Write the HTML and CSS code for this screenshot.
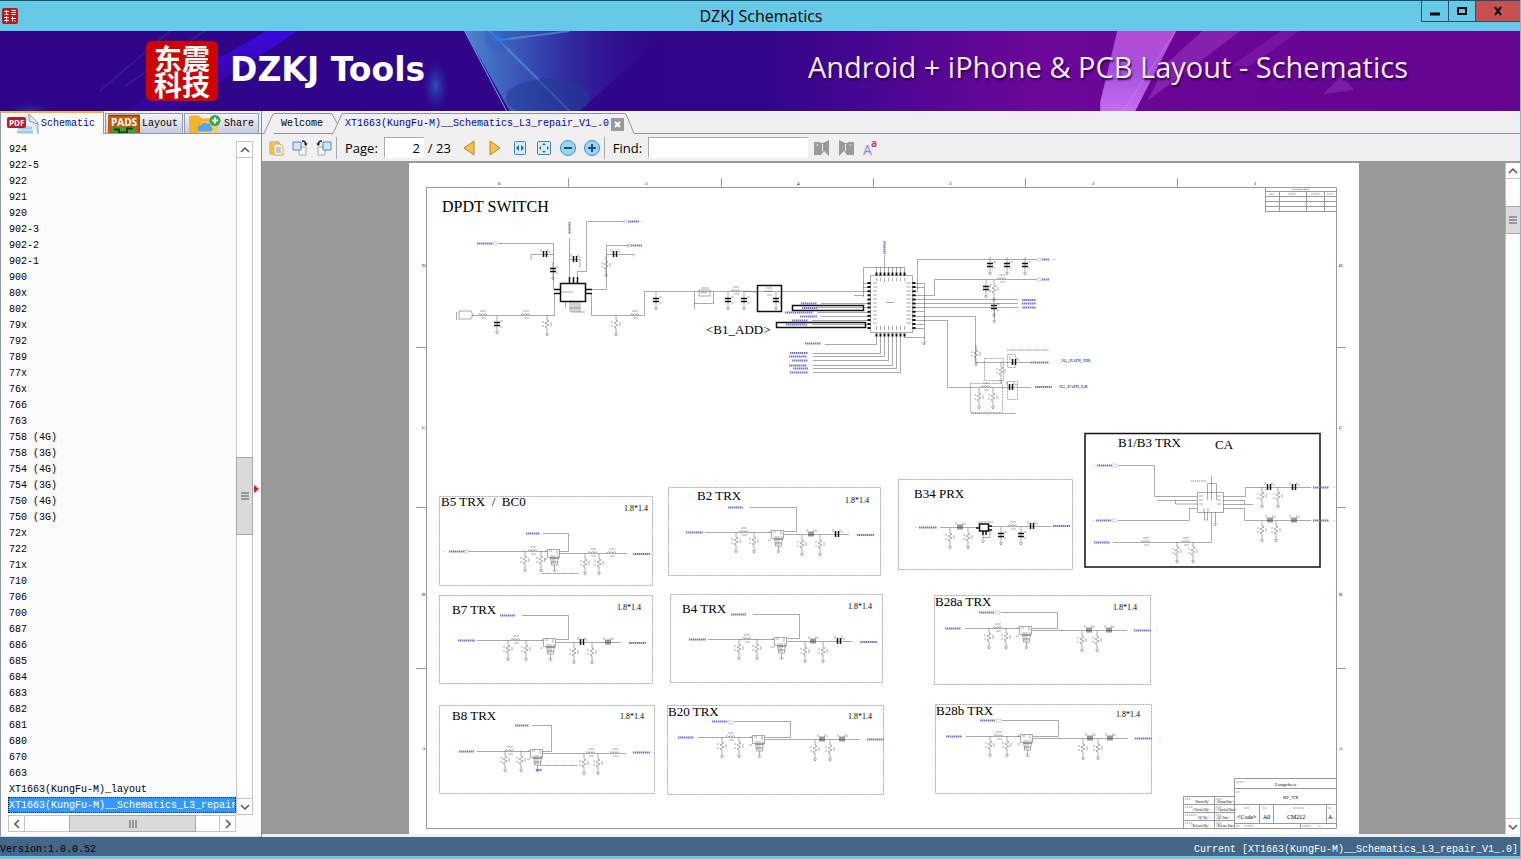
FILE: index.html
```html
<!DOCTYPE html>
<html lang="en">
<head>
<meta charset="utf-8">
<title>DZKJ Schematics</title>
<link rel="stylesheet" href="styles.css">
</head>
<body>
<header class="titlebar">
  <svg class="app-icon" viewBox="0 0 16 16" aria-hidden="true"><rect width="16" height="16" rx="2" fill="#c8100c"/><path d="M2 3.500h5M4.500 2v5M2.500 6.500h4M9 2.500h5M9 4.500h5M9.500 6.500h4M2 9.500h5M4.500 8.500v6M2 12.500h5M9 10.500h5M10.500 8.500v5M12 12l2 2" stroke="#fff" fill="none"/></svg>
  <h1 class="title">DZKJ Schematics</h1>
  <div class="win-buttons">
    <button class="win" aria-label="Minimize"><svg viewBox="0 0 12 12"><path d="M1 9h10" stroke="#000" stroke-width="3"/></svg></button>
    <button class="win" aria-label="Maximize"><svg viewBox="0 0 12 12"><path d="M2 3h8v6H2z" fill="none" stroke="#000" stroke-width="2"/></svg></button>
    <button class="win win-close" aria-label="Close"><svg viewBox="0 0 12 12"><path d="M3 2l6 8M9 2l-6 8" stroke="#000" stroke-width="2"/></svg></button>
  </div>
</header>
<section class="banner">
  <svg class="banner-art" viewBox="0 31 1521 80" preserveAspectRatio="none" aria-hidden="true">
    <defs>
      <linearGradient id="sky"><stop offset="0" stop-color="#2e0587"/><stop offset=".5" stop-color="#30068b"/><stop offset=".58" stop-color="#4a0792"/><stop offset=".68" stop-color="#6b0799"/><stop offset="1" stop-color="#640490"/></linearGradient>
      <linearGradient id="ray" x1="0" y1="0" x2="0" y2="1"><stop offset="0" stop-color="#3b08e0"/><stop offset="1" stop-color="#3607a6" stop-opacity=".5"/></linearGradient>
      <linearGradient id="prism"><stop offset="0" stop-color="#4a86cf"/><stop offset=".35" stop-color="#3447b0"/><stop offset="1" stop-color="#30068b" stop-opacity="0"/></linearGradient>
      <linearGradient id="beam" x1="0" y1="0" x2="0" y2="1"><stop offset="0" stop-color="#b44dd2"/><stop offset=".5" stop-color="#a650dc"/><stop offset="1" stop-color="#c66df2"/></linearGradient>
      <radialGradient id="glow"><stop offset="0" stop-color="#2877d8" stop-opacity=".8"/><stop offset="1" stop-color="#2a3bb0" stop-opacity="0"/></radialGradient>
    </defs>
    <rect y="31" width="1521" height="80" fill="url(#sky)"/>
    <path d="M267 31h31L175 111h-50z" fill="url(#ray)"/>
    <path d="M205 31l-80 55M170 31l-70 60" stroke="#4330a5" stroke-width="2" opacity=".45"/>
    <ellipse cx="436" cy="86" rx="13" ry="25" fill="url(#glow)" opacity=".8"/>
    <ellipse cx="30" cy="111" rx="20" ry="9" fill="url(#glow)" opacity=".5"/>
    <path d="M465 31h205l-90 80h-70z" fill="url(#prism)"/>
    <path d="M465 31l42 80" stroke="#70a9ed"/>
    <path d="M490 31l80 80M500 40l70-9" stroke="#55b8e2" stroke-width="2" opacity=".5"/>
    <ellipse cx="498" cy="38" rx="15" ry="17" fill="url(#glow)"/>
    <ellipse cx="548" cy="98" rx="42" ry="19" fill="#203b91" opacity=".55"/>
    <path d="M1118 31h59l-41 80h-35v-9z" fill="url(#beam)"/>
    <path d="M1176 32l-52 79" stroke="#de85f4" opacity=".6"/>
    <path d="M1203 31h38l-93 70 20-38z" fill="#9a34bc" opacity=".6"/>
    <path d="M1282 31h18l-50 35h-18z" fill="#8120ab" opacity=".6"/>
    <path d="M1342 76l13 14-31 4z" fill="#872bb4" opacity=".65"/>
  </svg>
  <div class="brand">
    <div class="seal"><p>东震科技</p></div>
    <strong class="brand-name">DZKJ Tools</strong>
  </div>
  <p class="slogan">Android + iPhone &amp; PCB Layout - Schematics</p>
</section>
<main class="workspace">
  <aside class="sidebar">
    <nav class="side-tabs">
      <button class="side-tab active"><svg class="i-pdf" viewBox="0 0 32 20"><path d="M13 0h10l8 9v11H13z" fill="#e9f3fa"/><path d="M22 0l9 9v11M22 0v7l9 3" fill="#d6e5ee" stroke="#8c9aa5"/><path d="M11 14h14M10 18h16" stroke="#9ecae7" stroke-width="3"/><rect x="0" y="3" width="19" height="11" rx="2" fill="#bd1a26"/><text x="2" y="12" class="ico-text pdf-text">PDF</text></svg>Schematic</button>
      <button class="side-tab"><svg class="i-pads" viewBox="0 0 32 19"><rect width="32" height="19" fill="#c45b12"/><path d="M1 1h30v17" fill="none" stroke="#8b3a0c"/><text x="3" y="11" class="ico-text">PADS</text><path d="M4 13h24v6H4z" fill="#3da32b"/><path d="M6 15h5v3h8v-4h6" stroke="#173e13" stroke-width="2" fill="none"/></svg>Layout</button>
      <button class="side-tab share-tab"><svg class="i-share" viewBox="0 0 32 19"><path d="M0 3q0-2 2-2h8l3 3h15v15H0z" fill="#f6b42a"/><path d="M13 7h16v12H9z" fill="#ffcd50"/><path d="M9 16q-2-5 3-5 2-5 6-2 4-1 4 3 4 4-1 5H11q-2 0-2-1" fill="#58a7e6"/><circle cx="26" cy="6" r="5.500" fill="#36a54b"/><path d="M26 3v6M23 6h6" stroke="#fff" stroke-width="2"/></svg>Share</button>
    </nav>
    <div class="side-body">
      <div class="list-area">
        <ul class="file-list">
          <li><button>924</button></li><li><button>922-5</button></li><li><button>922</button></li><li><button>921</button></li><li><button>920</button></li><li><button>902-3</button></li><li><button>902-2</button></li><li><button>902-1</button></li><li><button>900</button></li><li><button>80x</button></li><li><button>802</button></li><li><button>79x</button></li><li><button>792</button></li><li><button>789</button></li><li><button>77x</button></li><li><button>76x</button></li><li><button>766</button></li><li><button>763</button></li><li><button>758 (4G)</button></li><li><button>758 (3G)</button></li><li><button>754 (4G)</button></li><li><button>754 (3G)</button></li><li><button>750 (4G)</button></li><li><button>750 (3G)</button></li><li><button>72x</button></li><li><button>722</button></li><li><button>71x</button></li><li><button>710</button></li><li><button>706</button></li><li><button>700</button></li><li><button>687</button></li><li><button>686</button></li><li><button>685</button></li><li><button>684</button></li><li><button>683</button></li><li><button>682</button></li><li><button>681</button></li><li><button>680</button></li><li><button>670</button></li><li><button>663</button></li><li><button>XT1663(KungFu-M)_layout</button></li><li><button class="selected">XT1663(KungFu-M)__Schematics_L3_repair_V1_.0</button></li>
        </ul>
        <div class="scroll-v">
          <button class="arrow" aria-label="Scroll up"><svg viewBox="0 0 10 10"><path d="M1 7l4-4 4 4"/></svg></button>
          <div class="track side-track"><div class="thumb"><svg viewBox="0 0 10 10"><path d="M1 2h8M1 5h8M1 8h8"/></svg></div></div>
          <button class="arrow" aria-label="Scroll down"><svg viewBox="0 0 10 10"><path d="M1 3l4 4 4-4"/></svg></button>
        </div>
      </div>
      <div class="scroll-h">
        <button class="arrow" aria-label="Scroll left"><svg viewBox="0 0 10 10"><path d="M7 1L3 5l4 4"/></svg></button>
        <div class="track"><div class="thumb"><svg viewBox="0 0 10 10"><path d="M2 1v8M5 1v8M8 1v8"/></svg></div></div>
        <button class="arrow" aria-label="Scroll right"><svg viewBox="0 0 10 10"><path d="M3 1l4 4-4 4"/></svg></button>
      </div>
      <button class="splitter" aria-label="Collapse panel"><svg viewBox="0 0 5 8"><path d="M0 0l5 4-5 4z" fill="#d21f1f"/></svg></button>
    </div>
  </aside>
  <section class="viewer">
    <nav class="doc-tabs">
      <svg class="edge" viewBox="0 0 12 21"><path d="M0 20.500h2L11 1l1-.5"/></svg>
      <button class="doc-tab">Welcome</button>
      <svg class="edge" viewBox="0 0 12 21"><path d="M0 .5l1 .5 5 9M0 20.500h2L11 1l1-.5"/></svg>
      <button class="doc-tab current">XT1663(KungFu-M)__Schematics_L3_repair_V1_.0</button>
      <button class="tab-close" aria-label="Close tab"><svg viewBox="0 0 13 13"><path d="M4 4l5 5M9 4l-5 5" stroke="#fff" stroke-width="2"/></svg></button>
      <svg class="edge" viewBox="0 0 12 21"><path d="M0 .5l2 .5 8 19.500h2"/></svg>
      <span class="rest"></span>
    </nav>
    <div class="toolbar">
      <button class="tool" aria-label="Open"><svg viewBox="0 0 16 16"><path d="M2 2h9v12H2z" fill="#f6d88a" stroke="#c79d45"/><path d="M6 4h6l3 3v8H6z" fill="#fff7dd" stroke="#c9a14a"/><path d="M8 8h5M8 10h5M8 12h5" stroke="#6f9dc5"/><path d="M2 2l4 2v11l-4-2z" fill="#edbd56"/></svg></button>
      <button class="tool" aria-label="Rotate right"><svg viewBox="0 0 16 16"><path d="M7 7h7v8H7z" fill="#f4f6f8" stroke="#a3a9b0"/><path d="M1 2h8v8H1z" fill="#cfe5f8" stroke="#5887b7"/><path d="M10 1q4 0 4 4" fill="none" stroke="#222" stroke-width="1.500"/><path d="M11.500 3.500h4L14 6z" fill="#222"/></svg></button>
      <button class="tool" aria-label="Rotate left"><svg viewBox="0 0 16 16"><path d="M2 7h7v8H2z" fill="#f4f6f8" stroke="#a3a9b0"/><path d="M7 2h8v8H7z" fill="#cfe5f8" stroke="#5887b7"/><path d="M6 1Q2 1 2 5" fill="none" stroke="#222" stroke-width="1.500"/><path d="M4.500 3.500h-4L2 6z" fill="#222"/></svg></button>
      <span class="sep"></span>
      <label for="page">Page:</label>
      <input id="page" class="page-input" type="text" value="2">
      <span class="total">/ 23</span>
      <button class="tool wide" aria-label="Previous page"><svg viewBox="0 0 16 16"><path d="M13 1v14L3 8z" fill="#f1c34a" stroke="#b98316"/></svg></button>
      <button class="tool wide" aria-label="Next page"><svg viewBox="0 0 16 16"><path d="M3 1v14l10-7z" fill="#f1c34a" stroke="#b98316"/></svg></button>
      <button class="tool" aria-label="Fit width"><svg viewBox="0 0 16 16"><rect x="2.500" y="1.500" width="11" height="13" rx="1" fill="#d9ecfb" stroke="#3e83c6"/><path d="M7 5v6L4 8zM9 5v6l3-3z" fill="#2168ae"/></svg></button>
      <button class="tool" aria-label="Fit page"><svg viewBox="0 0 16 16"><rect x="1.500" y="1.500" width="13" height="13" rx="1" fill="#d9ecfb" stroke="#3e83c6"/><path d="M8 3l2 2H6zM8 13l2-2H6zM3 8l2-2v4zM13 8l-2-2v4z" fill="#2168ae"/></svg></button>
      <button class="tool" aria-label="Zoom out"><svg viewBox="0 0 16 16"><circle cx="8" cy="8" r="7.500" fill="#9dd3f6" stroke="#3b8bc7"/><path d="M4 8h8" stroke="#13518d" stroke-width="2"/></svg></button>
      <button class="tool" aria-label="Zoom in"><svg viewBox="0 0 16 16"><circle cx="8" cy="8" r="7.500" fill="#9dd3f6" stroke="#3b8bc7"/><path d="M4 8h8M8 4v8" stroke="#13518d" stroke-width="2"/></svg></button>
      <span class="sep"></span>
      <label for="find" class="find-label">Find:</label>
      <input id="find" class="find-input" type="text">
      <button class="tool" aria-label="Find previous"><svg viewBox="0 0 16 16"><path d="M0 2h5l2 1h2l6-3v16l-5-5-3 4H0z" fill="#999"/><path d="M2.500 5h2M8.500 4v7" stroke="#eee"/></svg></button>
      <button class="tool" aria-label="Find next"><svg viewBox="0 0 16 16"><path d="M16 2h-5l-2 1H7L1 0v16l5-5 3 4h7z" fill="#999"/><path d="M13.500 5h-2M7.500 4v7" stroke="#eee"/></svg></button>
      <button class="tool" aria-label="Match case"><svg viewBox="0 0 16 16"><text x="1" y="15" class="case-big">A</text><text x="9" y="7" class="case-small">a</text></svg></button>
    </div>
    <div class="canvas-row">
      <div class="canvas">
        <svg class="sheet" viewBox="408 163 950 671" role="img" aria-label="RF TX schematic page">
          <defs>
            <g id="gnd"><path d="M-2 0h4M-1 1.500h2"/></g>
            <g id="cap"><path d="M0-8v16M3-3h3M3 3h2"/><path d="M-3-1.500h6M-3 1.500h6" class="thick"/><use href="#gnd" y="8"/></g>
            <g id="caph"><path d="M-4-5v3M3-5v3M5-3v2" /><path d="M-1.500-3v6M1.500-3v6" class="thick"/></g>
            <g id="capg"><path d="M-4-5v3M3-5v3M5-4v2"/><path d="M-2-2.500v5M0-2.500v5M2-2.500v5" class="mid"/></g>
            <g id="res"><path d="M0 0v5l2 1-4 2 4 2-4 2 2 1v6M-4 6v2M-4 10v2M4 7v4"/><use href="#gnd" y="19"/></g>
            <g id="coil"><path d="M-5 0q1-3 3 0 1-3 3 0 1-3 3 0M-3-4h6M-2 3h5"/></g>
            <g id="ic"><path d="M.5.5h12v8H.5zM2 2h3M9 2h2M9 4h2M3 9.500h9M4 6v7h7V6M6 6v9M8 6v9M4.500 13v3h6v-3M7.500 16v5M-2 2h2M-3 10h3"/><use href="#gnd" x="7.500" y="21"/></g>
            <g id="trx-a">
              <path d="M-66 2.500H0M-21-22.500h46.500v24H13M13 4.500h65"/>
              <path class="sig" d="M-85 2.500h17M-43-22.500h15M86 5h17"/>
              <use href="#ic"/><use href="#coil" x="-27" y="2"/>
              <use href="#res" x="-35" y="2"/><use href="#res" x="-17" y="2"/><use href="#res" x="31" y="5"/><use href="#res" x="49" y="5"/>
            </g>
            <g id="trx-b">
              <path d="M-54 2.500H0M-18-13.500h56.500v16H13M13 4.500h95"/>
              <path class="sig" d="M-74 2.500h16M-40-13.500h15M115 4.500h17"/>
              <use href="#ic"/><use href="#coil" x="-21" y="2"/>
              <use href="#res" x="-30" y="2"/><use href="#res" x="-13" y="2"/><use href="#res" x="63" y="5"/><use href="#res" x="78" y="5"/>
              <use href="#capg" x="70" y="4"/><use href="#capg" x="90" y="4"/>
            </g>
          </defs>
          <rect x="408" y="163" width="950" height="671" fill="#fff"/>
          <g class="frame">
            <path d="M425.500 187.500h910v641h-910zM567.500 178v9M720.500 178v9M872.500 178v9M1024.500 178v9M1176.500 178v9M415 347.500h10M415 507.500h10M415 668.500h10M1336 347.500h9M1336 507.500h9M1336 668.500h9"/>
            <path d="M1264.500 187.500v24h71M1264 191.500h71M1264 196.500h71M1264 201.500h71M1264 206.500h71M1278.500 191v20M1305.500 191v20M1323.500 191v20"/>
            <path d="M1233.500 828v-49.500h102M1233 788.500h102M1233 804.500h102M1233 823.500h102M1258.500 804v19M1272.500 804v19M1325.500 804v19M1299.500 823v5M1182.500 828v-31.500h51M1182 804.500h51M1182 812.500h51M1182 820.500h51M1213.500 797v31"/>
          </g>
          <g class="mark">
            <text x="497" y="185">6</text><text x="644" y="185">5</text><text x="796" y="185">4</text><text x="948" y="185">3</text><text x="1091" y="185">2</text><text x="1253" y="185">1</text>
            <text x="421" y="267">D</text><text x="421" y="429">C</text><text x="421" y="596">B</text><text x="421" y="750">A</text>
            <text x="1338" y="267">D</text><text x="1338" y="429">C</text><text x="1338" y="596">B</text><text x="1338" y="750">A</text>
          </g>
          <g class="stamp">
            <text x="1193" y="803">&lt;Drawn By&gt;</text><text x="1215" y="803">&lt;Drawn Date&gt;</text><text x="1191" y="811">&lt;Checked By&gt;</text><text x="1215" y="811">&lt;Checked Date&gt;</text><text x="1196" y="819">&lt;QC By&gt;</text><text x="1215" y="819">&lt;QC Date&gt;</text><text x="1190" y="827">&lt;Released By&gt;</text><text x="1215" y="827">&lt;Release Date&gt;</text>
          </g>
          <path class="tiny" d="M1291 189.500h17M1268 194h5M1287 194h8M1310 194h9M1326 194h6M1235 782h8M1235 792h4M1243 808h5M1262 808h4M1292 808h11M1327 808h3M1235 826h4M1243 826h9M1301 826h9M1318 826h2M1184 799h6M1215 799h6M1184 807h8M1215 807h6M1184 815h12M1215 815h6M1184 823h8M1215 823h6"/>
          <g class="small"><text x="1274" y="786">Longcheer</text><text x="1282" y="799">RF_TX</text></g>
          <g class="code"><text x="1236" y="819">&lt;Code&gt;</text><text x="1262" y="819">A0</text><text x="1286" y="819">CM212</text><text x="1327" y="819">A</text></g>

          <g class="boxes">
            <path d="M438.500 496.500h213v89h-213zM667.500 487.500h212v88h-212zM438.500 595.500h213v88h-213zM669.500 594.500h212v88h-212zM897.500 479.500h174v90h-174zM933.500 595.500h216v89h-216zM438.500 705.500h215v88h-215zM666.500 705.500h216v89h-216zM934.500 704.500h216v89h-216z"/>
            <path d="M983.500 358.500h19v22h-19zM1006.500 354.500h8v13h-8zM969.500 383.500h32v29h-32zM1006.500 381.500h10v18h-10z"/>
          </g>
          <path class="bold" d="M1084 433.500h235v133.500h-235zM559.500 283.500h25v18h-25zM756.500 285.500h24v26h-24zM791.500 305.500h71v5h-71zM775.500 322.500h89v5h-89z"/>

          <g class="wire">
            <path d="M497 243.500h55.500v46M530 260v-5.500h23M568.500 277v-39M568 259.500h11v8M576.500 277v-5.500h9v-50h38M590 289.500h15.500v-44h23M605 254.500h28v2M553.500 293v22.500H470M590.500 293v22.500h53v-24H869M693.500 292v11.500h19V292M693.500 303v6M756 292l-14-1M455.500 312v8M458 311h12l2 4-2 4h-12z"/>
            <path d="M569 302v10M571 302v10M573 302v10M575 302v10M577 302v10M579 302v10M568 308h11M570 312h14M564.500 302v6M560 292h12"/>
            <path d="M862.500 297v-29.500h41M853 295.500h10M862 283.500h7M862 287.500h7M875.500 267v8M879.500 267v8M883.500 255v20M887.500 267v8M891.500 267v8M895.500 267v8M899.500 267v8M903.500 267v8M869.500 275.500h42v57h-42zM820 303.500h49M816 307.500h53M816 312.500h53M820 316.500h49M811 320.500h58M811 324.500h58"/>
            <path d="M824 344.500h51.500v-10M812 353.500h67.500v-19M812 356.500h71.500v-22M812 360.500h75.500v-26M812 365.500h79.500v-31M812 368.500h83.500v-34M812 372.500h87.500v-38M903.500 334v3.500h20"/>
            <path d="M911 283.500h12.500v60M911 287.500h12M911 311.500h12M911 324.500h12M911 328.500h12M911 291.500h5.500v-32H1036M911 295.500h22.500v-16H1036M911 299.500h106M911 303.500h106M911 307.500h106M911 316.500h63.500v46H1030M911 320.500h35.500v67H1030M885 302.500h8"/>
            <path d="M872 283h4M872 287h4M872 291h4M872 295h4M872 299h4M872 303h4M872 307h4M872 311h4M872 315h4M872 319h4M872 323h4M905 283h5M905 287h5M905 291h5M905 295h5M905 299h5M905 303h5M905 307h5M905 311h5M905 315h5M905 319h5M905 323h5M875.500 278v3M879.500 278v3M883.500 278v4M887.500 278v3M891.500 278v3M895.500 278v3M899.500 278v3M903.500 278v3M875.500 326v4M879.500 326v4M883.500 326v4M887.500 326v4M891.500 326v4M895.500 326v4M899.500 326v4M903.500 326v4M698 290h11v6h-11zM700 288h8M700 293l3-1 3 1"/>
            <use href="#cap" x="496" y="324"/><use href="#cap" x="655" y="300"/><use href="#cap" x="727" y="300"/><use href="#cap" x="743" y="300"/><use href="#cap" x="775" y="300"/><use href="#cap" x="552" y="270"/>
            <use href="#caph" x="544" y="254"/><use href="#caph" x="574" y="259"/><use href="#caph" x="614" y="254"/>
            <use href="#res" x="546" y="315"/><use href="#res" x="615" y="315"/><use href="#res" x="605" y="256"/>
            <use href="#coil" x="482" y="315"/><use href="#coil" x="525" y="315"/><use href="#coil" x="634" y="315"/><use href="#coil" x="735" y="291"/><use href="#coil" x="768" y="292"/>
            <use href="#cap" x="989" y="265"/><use href="#cap" x="1006" y="265"/><use href="#cap" x="1024" y="265"/><use href="#cap" x="985" y="288"/><use href="#res" x="993" y="280"/><use href="#cap" x="993" y="307"/><path d="M993.500 308v13"/><use href="#gnd" x="993" y="321"/><use href="#coil" x="1001" y="279"/>
            <use href="#res" x="975" y="345"/><use href="#res" x="1000" y="362"/><use href="#res" x="978" y="388"/><use href="#res" x="992" y="388"/><use href="#caph" x="1013" y="362"/><use href="#caph" x="1010" y="387"/><use href="#coil" x="985" y="387"/><use href="#gnd" x="923" y="343"/>

            <path d="M542 533.500h25.500v18H558M467 551.500h79M558 553.500h68"/>
            <use href="#ic" x="546" y="549"/><use href="#res" x="524" y="551"/><use href="#res" x="540" y="551"/><use href="#res" x="584" y="554"/><use href="#res" x="598" y="554"/><use href="#coil" x="532" y="551"/><use href="#coil" x="592" y="553"/><use href="#coil" x="611" y="553"/>
            <path d="M531 725.500h19.500v26H541M476 751.500h53M541 753.500h84"/>
            <use href="#ic" x="529" y="749"/><use href="#res" x="504" y="751"/><use href="#res" x="520" y="751"/><use href="#res" x="583" y="754"/><use href="#res" x="597" y="754"/><use href="#coil" x="509" y="751"/><use href="#coil" x="590" y="753"/><use href="#coil" x="614" y="753"/>

            <use href="#trx-a" x="770" y="530"/><use href="#capg" x="810" y="534"/><use href="#caph" x="836" y="534"/>
            <use href="#trx-a" x="773" y="637"/><use href="#capg" x="812" y="641"/><use href="#caph" x="838" y="641"/>
            <use href="#trx-a" x="542" y="638"/><use href="#caph" x="581" y="642"/><use href="#capg" x="607" y="642"/>
            <use href="#trx-b" x="1018" y="626"/><use href="#trx-b" x="751" y="735"/><use href="#trx-b" x="1019" y="734"/>

            <path d="M939 527.500h38M988 526.500h62M982 532v8M982 537.500h7v-7"/>
            <path class="bold" d="M978.500 524h9v7h-9z"/><path class="thick" d="M975 528h3M988 526h3M988 530h3M982 531v4M985 531v4"/>
            <use href="#capg" x="959" y="527"/><use href="#res" x="949" y="528"/><use href="#res" x="967" y="528"/><use href="#cap" x="1000" y="535"/><use href="#cap" x="1020" y="535"/><use href="#caph" x="1031" y="526"/><use href="#coil" x="1012" y="526"/><use href="#gnd" x="982" y="541"/>

            <path d="M1117 465.500h36.500v31H1196M1156 500.500h40M1174.500 500v4h22M1117 520.500h71.500v-12h8M1112 542.500h98.500v-30M1196.500 492.500h26v20h-26zM1222 496.500h22.500v-9H1310M1222 500.500h21.500v4M1222 504.500h30M1222 508.500h21.500v12H1310M1206.500 500v-16.500h9V500M1210.500 476v24M1203.500 512v8h3v-8M1214.500 512v12M1198 496h4M1198 500h4M1198 504h4M1216 496h4M1216 500h4M1216 504h4M1203 508v4M1207 508v4"/>
            <use href="#res" x="1176" y="542"/><use href="#res" x="1192" y="542"/><use href="#coil" x="1145" y="542"/><use href="#coil" x="1185" y="542"/>
            <use href="#res" x="1261" y="487"/><use href="#res" x="1277" y="487"/><use href="#res" x="1261" y="521"/><use href="#res" x="1275" y="521"/>
            <use href="#caph" x="1268" y="487"/><use href="#caph" x="1293" y="487"/><use href="#capg" x="1269" y="520"/><use href="#capg" x="1293" y="520"/><use href="#gnd" x="1214" y="524"/>
          </g>
          <g class="pins">
            <path d="M868 282v48M913 282v48" stroke-dasharray="2 2.100"/>
            <path d="M874.500 274h32M874.500 335h32" stroke-dasharray="2 2"/>
            <path class="bold" d="M553 289.500h6M553 293.500h6M585 289.500h6M585 293.500h6M568.500 277v6M572.500 277v6M576.500 277v6"/>
          </g>
          <path class="sig" d="M476 243.500h16M568.500 222v12M627 221.500h11M630 245.500h11M883.500 241v13M800 303.500h16M801 308h15M784 312.500h28M799 316.500h17M791 320.500h16M785 324.500h21M804 343.500h16M789 353h18M788 356.500h18M791 360.500h16M788 365.500h18M792 368.500h15M789 372.500h18M1041 259.500h7M1041 279.500h7M1021 300h14M1021 303.500h14M1021 307.500h14M1030 362.500h18M1034 387h17M525 533.500h14M448 551.500h16M632 554h17M514 725.500h14M458 751.500h15M632 752.500h17M535 770h6M918 527.500h18M1052 526h17M1096 465.500h15M1095 520.500h15M1093 542.500h16M1312 487.500h16M1312 520.500h16"/>
          <path class="tiny" d="M1006 350h42M970 413.500h45M540 573.500h38M539 765.500h37M1190 481h16M977 522h15"/>
          <path class="ends" d="M492 242h4v3h-4zM623 220h3v3h-3zM626 244h3v3h-3zM1036 258h4v3h-4zM1036 278h4v3h-4zM1111 464h5v3h-5zM1111 519h5v3h-5zM464 550h3v3h-3zM994 611h5v3h-5zM727 721h5v3h-5zM995 719h5v3h-5zM640 221.500h2M1051 259.500h4M442 551.500h2M1092 465.500h2M1091 520.500h2M914 527.500h2M1332 487.500h2M1332 520.500h2M1155 630.500h2M1158 738.500h2"/>

          <g class="heading">
            <text x="441" y="212" class="main-heading">DPDT SWITCH</text>
            <text x="705" y="334">&lt;B1_ADD&gt;</text>
            <text x="440" y="506">B5 TRX&#160; /&#160; BC0</text><text x="696" y="500">B2 TRX</text><text x="913" y="498">B34 PRX</text><text x="1117" y="447">B1/B3 TRX</text><text x="1214" y="449">CA</text>
            <text x="451" y="614">B7 TRX</text><text x="681" y="613">B4 TRX</text><text x="934" y="606">B28a TRX</text>
            <text x="451" y="720">B8 TRX</text><text x="667" y="716">B20 TRX</text><text x="935" y="715">B28b TRX</text>
          </g>
          <g class="dim"><text x="623" y="511">1.8*1.4</text><text x="844" y="503">1.8*1.4</text><text x="616" y="610">1.8*1.4</text><text x="847" y="609">1.8*1.4</text><text x="1112" y="610">1.8*1.4</text><text x="619" y="719">1.8*1.4</text><text x="847" y="719">1.8*1.4</text><text x="1115" y="717">1.8*1.4</text></g>
          <g class="net"><text x="1060" y="362">2G_PAIN_HB</text><text x="1058" y="388">2G_PAIN_LB</text></g>
        </svg>
      </div>
      <div class="scroll-v main-scroll">
        <button class="arrow" aria-label="Page up"><svg viewBox="0 0 10 10"><path d="M1 7l4-4 4 4"/></svg></button>
        <div class="track main-track"><div class="thumb"><svg viewBox="0 0 10 10"><path d="M1 2h8M1 5h8M1 8h8"/></svg></div></div>
        <button class="arrow" aria-label="Page down"><svg viewBox="0 0 10 10"><path d="M1 3l4 4 4-4"/></svg></button>
      </div>
    </div>
  </section>
</main>
<footer class="status"><span>Version:1.0.0.52</span><span class="current-file">Current [XT1663(KungFu-M)__Schematics_L3_repair_V1_.0]</span></footer>
</body>
</html>
```

FILE: styles.css
```css
* { box-sizing: border-box; }
body {
  margin: 0;
  height: 100vh;
  display: flex;
  flex-direction: column;
  overflow: hidden;
  background: #f0f0f0;
  border-right: 1px solid #67c9e8;
  border-bottom: 3px solid #67c9e8;
  font-family: "Liberation Mono", monospace;
  font-size: 10px;
  color: #000;
}
button { margin: 0; padding: 0; border: 0; background: none; font: inherit; color: inherit; }
svg { display: block; }

.titlebar {
  flex: none;
  height: 31px;
  display: grid;
  grid-template-columns: 1fr auto 1fr;
  align-items: center;
  padding-left: 2px;
  background: #67c9e8;
  border-top: 1px solid #1d4f6b;
}
.app-icon { width: 16px; height: 16px; }
.title { margin: 0; font: 400 16px/20px "Open Sans", sans-serif; }
.win-buttons { justify-self: end; align-self: start; display: flex; border: 1px solid #2c5364; border-top: 0; border-right: 0; }
.win { width: 27px; height: 20px; display: grid; place-items: center; border-right: 1px solid #2c5364; }
.win svg { width: 12px; height: 12px; }
.win-close { width: 44px; background: #c75050; border-right: 0; }

.banner {
  position: relative;
  flex: none;
  height: 80px;
  display: flex;
  align-items: center;
  justify-content: space-between;
  padding: 0 112px 0 146px;
  color: #fff;
}
.banner-art { position: absolute; inset: 0; width: 100%; height: 100%; }
.brand { position: relative; display: flex; align-items: center; gap: 12px; }
.seal {
  width: 72px;
  height: 60px;
  display: grid;
  place-items: center;
  border-radius: 6px;
  background: #cb0503;
}
.seal p { width: 58px; margin: 0; font: 700 28px/26px "Noto Sans CJK SC", sans-serif; word-break: break-all; text-align: center; }
.brand-name { padding-bottom: 2px; font: 700 33px/40px "DejaVu Sans", sans-serif; }
.slogan { position: relative; margin: 0; padding-bottom: 8px; font: 400 29px/40px "Open Sans", sans-serif; text-shadow: 1px 2px 2px #2a0048; color: #f3eafa; }

.workspace { flex: 1; min-height: 0; display: flex; }
.sidebar { flex: none; width: 262px; display: flex; flex-direction: column; border-right: 1px solid #848b94; background: #f0f0f0; }
.side-tabs { flex: none; height: 23px; display: flex; align-items: flex-end; gap: 1px; border-bottom: 1px solid #8e9bae; }
.side-tab {
  height: 20px;
  display: flex;
  align-items: center;
  gap: 2px;
  padding: 0 4px 0 2px;
  overflow: hidden;
  border: 1px solid #8e9bae;
  border-bottom: 0;
  background: linear-gradient(#f5f5fa, #c9cbe0);
}
.side-tab.active { height: 23px; width: 104px; margin-bottom: -1px; padding-left: 6px; border-top: 2px solid #f5b041; background: #fcfcfc; color: #0000a8; }
.side-tab.share-tab { gap: 3px; padding-left: 4px; }
.i-pdf, .i-pads, .i-share { flex: none; width: 32px; height: 20px; }
.ico-text { font: 700 10px "Open Sans", sans-serif; fill: #fff; }
.pdf-text { font-size: 8px; }
.side-body { position: relative; flex: 1; min-height: 0; display: flex; flex-direction: column; padding: 7px 8px 4px 7px; background: #fcfcfd; border-left: 1px solid #8e9bae; border-bottom: 1px solid #d5dbe2; }
.list-area { flex: 1; min-height: 0; display: flex; }
.file-list { flex: 1; min-width: 0; margin: 0; padding: 0; list-style: none; overflow: hidden; }
.file-list button { display: block; width: 100%; height: 16px; padding: 2px 0 0 1px; text-align: left; line-height: 14px; white-space: nowrap; overflow: hidden; }
.file-list .selected { background: #3399ff; color: #fff; outline: 1px dotted #222; outline-offset: -1px; }
.scroll-v { flex: none; width: 17px; display: flex; flex-direction: column; background: #fff; border: 1px solid #c4c4c4; }
.scroll-h { flex: none; height: 17px; display: flex; margin-right: 17px; background: #fff; border: 1px solid #c4c4c4; }
.arrow { flex: none; width: 15px; height: 15px; display: grid; place-items: center; background: #fff; }
.arrow svg, .thumb svg { width: 10px; height: 10px; fill: none; stroke: #555; stroke-width: 1; }
.arrow svg { stroke-width: 1.5; }
.track { flex: 1; display: flex; border: solid #c4c4c4; border-width: 1px 0; }
.scroll-h .track { border-width: 0 1px; padding: 0 24px 0 45px; }
.thumb { flex: 1; display: grid; place-items: center; background: #dadada; outline: 1px solid #aaa; }
.side-track { padding: 300px 0 264px; }
.splitter { position: absolute; right: 2px; top: 50%; }
.splitter svg { width: 5px; height: 8px; }

.viewer { flex: 1; min-width: 0; display: flex; flex-direction: column; }
.doc-tabs { flex: none; height: 23px; display: flex; align-items: flex-end; }
.edge { flex: none; width: 12px; height: 21px; fill: none; stroke: #8e959e; }
.doc-tab { height: 21px; padding: 0 8px 0 7px; border-top: 1px solid #8e959e; border-bottom: 1px solid #8e959e; }
.doc-tab.current { padding: 0 2px 0 2px; border-bottom-color: transparent; color: #0000c0; }
.tab-close { height: 21px; border-top: 1px solid #8e959e; }
.tab-close svg { width: 13px; height: 13px; background: #999; }
.rest { flex: 1; border-bottom: 1px solid #8e959e; }
.toolbar { flex: none; height: 29px; display: flex; align-items: center; gap: 8px; padding-left: 6px; border-bottom: 2px solid #999; font: 13px "Open Sans", sans-serif; }
.tool { flex: none; width: 16px; height: 16px; }
.tool svg { width: 16px; height: 16px; overflow: visible; }
.tool.wide { margin: 0 1px; }
.sep { width: 1px; height: 22px; margin: 0 0 0 -4px; background: #aaa; }
.toolbar input { height: 21px; border: 1px solid #aaa; border-right-color: #fff; border-bottom-color: #fff; border-radius: 0; background: #fff; font: inherit; }
.page-input { width: 40px; margin: 0 -4px 0 -2px; padding: 0 3px; text-align: right; }
.total { margin-right: 1px; }
.find-input { width: 160px; margin: 0 -2px; }
.case-big { font: 14px "Open Sans", sans-serif; fill: #9180e0; }
.case-small { font: 700 10px "Open Sans", sans-serif; fill: #c13a8e; }

.canvas-row { flex: 1; min-height: 0; display: flex; padding-bottom: 3px; }
.canvas { flex: 1; min-width: 0; display: flex; justify-content: center; background: #999; }
.sheet { height: 100%; max-width: 100%; }
.main-scroll { width: 15px; border-width: 0 0 0 1px; }
.main-scroll .arrow { width: 14px; }
.main-track { padding: 28px 0 585px; }

.sheet text { font-family: "Liberation Serif", serif; fill: #000; }
.heading text { font-size: 13px; }
.heading .main-heading { font-size: 16px; }
.dim text { font-size: 8px; }
.net text { font-size: 5px; }
.mark text { font-size: 5px; }
.stamp text { font-size: 3px; }
.small text { font-size: 5px; }
.code text { font-size: 6px; }
.frame { fill: none; stroke: #999; }
.boxes { fill: none; stroke: #aaa; stroke-dasharray: 2 1; }
.wire { fill: none; stroke: #555; stroke-width: 0.5; }
.mid { stroke: #333; stroke-width: 1; }
.thick { stroke: #111; stroke-width: 1.5; }
.bold { fill: none; stroke: #111; stroke-width: 1.5; }
.pins { fill: none; stroke: #111; stroke-width: 3; }
.sig { fill: none; stroke: #7676cf; stroke-width: 2; stroke-dasharray: 1.5 0.5; }
.ends { fill: none; stroke: #aab; stroke-width: 0.5; }
.tiny { fill: none; stroke: #999; stroke-width: 1; stroke-dasharray: 1.5 0.5; }

.status { flex: none; height: 19px; display: flex; align-items: center; justify-content: space-between; padding: 5px 2px 0 0; background: #446688; }
.current-file { color: #fff; }
```
